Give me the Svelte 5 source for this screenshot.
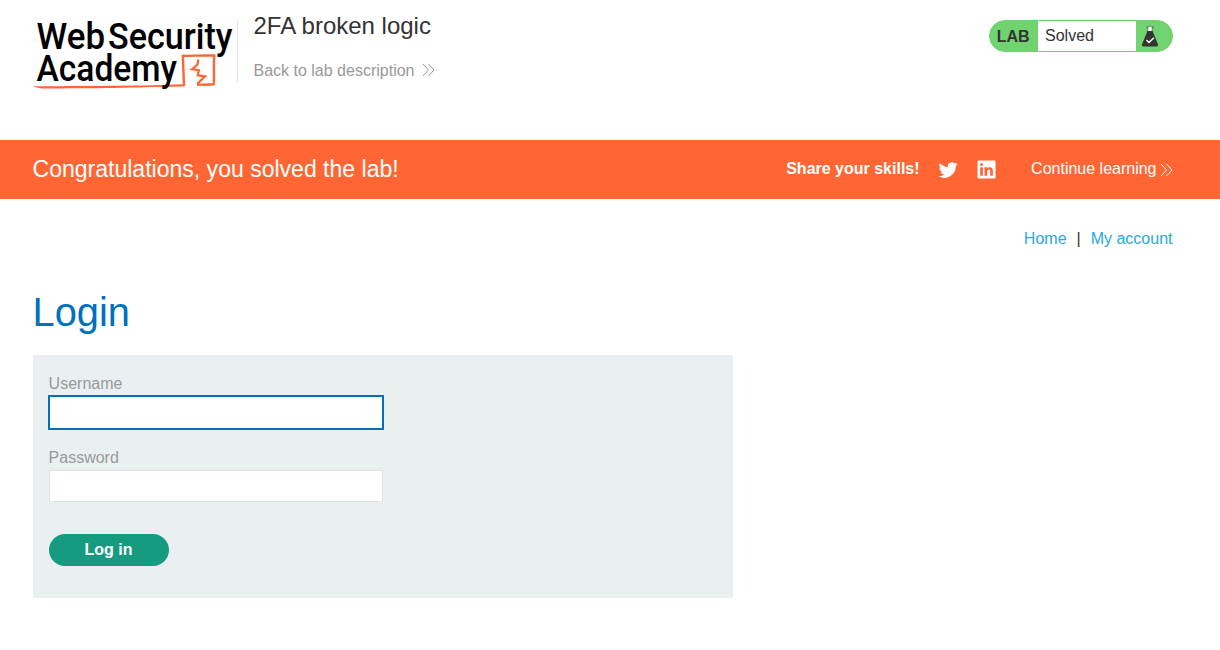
<script>
  let username = $state('');
  let password = $state('');
</script>

{#snippet chevrons()}
  <svg class="chevrons" width="13" height="14" viewBox="0 0 13 14" fill="none" stroke="currentColor" stroke-width="1">
    <path d="M1 1l5.5 6L1 13M6.5 1L12 7l-5.5 6" />
  </svg>
{/snippet}

<header>
  <a class="logo" href="#top" aria-label="Web Security Academy">
    <svg width="205" height="90" viewBox="32 4 205 90">
      <path d="M32.5 86.2C60 86 130 86.300 184 84.200v2.400C150 87 100 88.900 42 88.400C38 88 36 87 32.500 86.200z" fill="#ff6633" />
      <path d="M184 86L182.800 55.800C190 56 204 55.300 214.300 55.500C213.200 65 214.600 76 213.700 84.300C207 85 202 84.600 197 84.600" fill="none" stroke="#ff6633" stroke-width="2.400" stroke-linejoin="round" />
      <path d="M198.300 59.500L197.500 64.500L192 69.200L198.800 70.200L197.800 75.300L205 76.300L197.200 84" fill="none" stroke="#ff6633" stroke-width="2.300" />
      <text x="36.500" y="48.500" textLength="68.500" lengthAdjust="spacingAndGlyphs">Web</text>
      <text x="108" y="48.500" textLength="124.500" lengthAdjust="spacingAndGlyphs">Security</text>
      <text x="36.500" y="81" textLength="140.500" lengthAdjust="spacingAndGlyphs">Academy</text>
    </svg>
  </a>
  <div class="title">
    <h2>2FA broken logic</h2>
    <a class="back" href="#description">Back to lab description {@render chevrons()}</a>
  </div>
  <div class="status">
    <span class="lab">LAB</span>
    <span class="state">Solved</span>
    <span class="flask">
      <svg width="18" height="22" viewBox="0 0 18 22">
        <path d="M5.500 .5h7v1.500h-1v4h-5V2h-1z" fill="#666" />
        <path d="M7.300 1h3.400v4.500H7.300z" fill="#fff" />
        <path d="M6.500 5h5L17 18.500q.4 2-1.500 2h-13Q.6 20.500 1 18.500z" fill="#333332" />
        <path d="M5.500 14l2.500 2.500 4.800-4.700" fill="none" stroke="#fff" stroke-width="1.400" />
      </svg>
    </span>
  </div>
</header>

<section class="banner">
  <h4>Congratulations, you solved the lab!</h4>
  <span class="share">Share your skills!</span>
  <a class="social twitter" href="#twitter" aria-label="Twitter">
    <svg width="20" height="20" viewBox="0 0 24 24" fill="#fff"><path d="M23.600 4.900c-.8.400-1.700.6-2.700.8 1-.6 1.700-1.500 2-2.600-.9.500-1.900.9-3 1.100a4.700 4.700 0 0 0-8 4.300C8 8.300 4.500 6.400 2.200 3.600a4.700 4.700 0 0 0 1.400 6.300c-.7 0-1.500-.2-2.100-.6 0 2.300 1.600 4.200 3.800 4.700-.7.200-1.400.2-2.100.1.600 1.900 2.300 3.200 4.400 3.300A9.500 9.500 0 0 1 .6 19.300 13.400 13.400 0 0 0 21.200 7.400c.9-.7 1.700-1.500 2.400-2.500z" /></svg>
  </a>
  <a class="social linkedin" href="#linkedin" aria-label="LinkedIn">
    <svg width="19" height="19" viewBox="0 0 19 19"><path fill="#fff" fill-rule="evenodd" d="M1.500.5h16q1 0 1 1v16q0 1-1 1h-16q-1 0-1-1v-16q0-1 1-1zM3.200 7.300v8.500H5.900V7.300zM4.550 3a1.500 1.500 0 1 0 0 3 1.500 1.500 0 0 0 0-3zM7.500 7.300v8.500h2.700v-4.300c0-2.600 3-2.800 3 0v4.300h2.700v-5c0-4.200-4.400-4.400-5.700-2.300V7.300z" /></svg>
  </a>
  <a class="continue" href="#learn">Continue learning {@render chevrons()}</a>
</section>

<main>
  <nav><a href="#home">Home</a><span>|</span><a href="#account">My account</a></nav>
  <h1>Login</h1>
  <form onsubmit={(e) => e.preventDefault()}>
    <label for="username">Username</label>
    <input id="username" class="active" type="text" bind:value={username} />
    <label for="password">Password</label>
    <input id="password" type="password" bind:value={password} />
    <button type="submit">Log in</button>
  </form>
</main>

<style>
  :global(body) {
    background: #fff;
    color: #333332;
    font: 16px/20px "Liberation Sans", Arial, sans-serif;
  }
  h1, h2, h4 { margin: 0; font-weight: 400; }
  a { text-decoration: none; color: inherit; }
  svg { display: block; }
  header {
    box-sizing: border-box;
    height: 140px;
    padding: 0 47px 0 32px;
    display: flex;
    align-items: flex-start;
  }
  .logo { margin-top: 4px; width: 205px; }
  .logo svg { overflow: visible; }
  .logo text {
    font-family: Roboto, sans-serif;
    font-size: 37.500px;
    font-weight: 500;
    fill: #000;
  }
  .title {
    margin-top: 20px;
    height: 62px;
    box-sizing: border-box;
    border-left: 1px solid #e2e2e2;
    padding-left: 15.500px;
  }
  h2 { font-size: 24px; line-height: 28px; margin-top: -8px; }
  .back { display: flex; margin-top: 21px; color: #999; }
  .back .chevrons { margin: 2px 0 0 8px; }
  .status {
    box-sizing: border-box;
    display: flex;
    width: 184px;
    height: 32px;
    margin: 20px 0 0 auto;
    border: 1px solid #70d36f;
    border-radius: 16px;
    overflow: hidden;
    background: #70d36f;
    line-height: 30px;
  }
  .lab { width: 48px; box-sizing: border-box; padding-left: 6.700px; font-weight: 700; line-height: 31px; }
  .state { width: 98px; box-sizing: border-box; padding-left: 7px; background: #fff; }
  .flask { padding: 5px 0 0 5px; }
  .banner {
    box-sizing: border-box;
    height: 59px;
    display: flex;
    align-items: center;
    padding: 0 47px 1px 32.500px;
    background: #ff6633;
    color: #fff;
  }
  h4 { font-size: 23.040px; line-height: 28px; }
  .share { margin-left: auto; font-weight: 700; }
  .social { padding-top: 2px; }
  .twitter { margin-left: 18.500px; }
  .linkedin { margin-left: 19px; padding-top: 1px; }
  .continue { display: flex; margin-left: 35px; }
  .continue .chevrons { margin: 4px 0 0 3.500px; }
  main { padding: 0 47.500px 0 32.500px; }
  nav {
    display: flex;
    justify-content: flex-end;
    gap: 10px;
    padding-top: 30px;
    color: #29a9df;
  }
  nav span { color: #333332; }
  h1 { margin-top: 40px; font-size: 39.800px; line-height: 46px; color: #0071bc; }
  form {
    box-sizing: border-box;
    width: 700px;
    height: 243px;
    margin: 20px 0 0 .5px;
    padding: 19px 15px 0;
    display: flex;
    flex-direction: column;
    align-items: flex-start;
    background: #eaeff2;
  }
  label { margin-left: .6px; color: #999; }
  input {
    box-sizing: border-box;
    width: 334px;
    height: 32px;
    margin: 2px 0 32px 1px;
    padding: 0 8px;
    border: 1px solid #e2e2e2;
    outline: none;
    background: #fff;
    font: inherit;
  }
  input.active {
    width: 336px;
    height: 35px;
    margin: 1px 0 18px;
    border: 2px solid #0071bc;
  }
  button {
    width: 120px;
    height: 32px;
    margin-left: 1px;
    padding: 0 1px 1px 0;
    border: 0;
    border-radius: 16px;
    background: #169b80;
    color: #fff;
    font: 700 16px "Liberation Sans", Arial, sans-serif;
  }
</style>
